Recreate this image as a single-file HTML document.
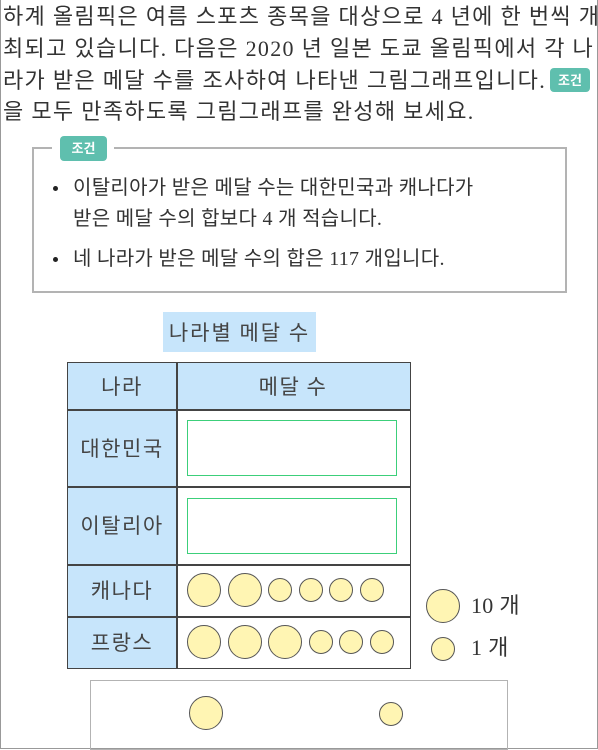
<!DOCTYPE html>
<html><head><meta charset="utf-8"><style>
*{margin:0;padding:0;box-sizing:border-box}
body{width:598px;height:749px;background:#fff;position:relative;overflow:hidden;font-family:"Liberation Serif","Noto Sans CJK KR",sans-serif;color:#333}
.frame{position:absolute;left:0;top:0;width:598px;height:749px;border:1px solid #999;border-top:none}
.p{position:absolute;left:3px;font-size:22px;line-height:30px;white-space:nowrap;letter-spacing:1.3px}
.badge{position:absolute;background:#5fbfae;color:#fff;font-family:"Noto Sans CJK KR",sans-serif;font-weight:bold;font-size:13px;border-radius:4px;text-align:center;line-height:24px}
.t{position:absolute;font-size:20px;line-height:26px;white-space:nowrap;letter-spacing:0.3px}
.dot{position:absolute;width:5px;height:5px;border-radius:50%;background:#222}
.c{position:absolute;border:1.5px solid #555;border-radius:50%;background:#fff5b3}
.cell{position:absolute;display:flex;align-items:center;justify-content:center;font-family:"Noto Sans CJK KR",sans-serif;font-size:21px;letter-spacing:1.5px;color:#444}
</style></head><body>
<div class="frame"></div>
<div class="p" style="top:2px">하계 올림픽은 여름 스포츠 종목을 대상으로 4 년에 한 번씩 개</div>
<div class="p" style="top:34px">최되고 있습니다. 다음은 2020 년 일본 도쿄 올림픽에서 각 나</div>
<div class="p" style="top:66px">라가 받은 메달 수를 조사하여 나타낸 그림그래프입니다.</div>
<div class="badge" style="left:550px;top:68px;width:40px;height:24px">조건</div>
<div class="p" style="top:97px">을 모두 만족하도록 그림그래프를 완성해 보세요.</div>

<div style="position:absolute;left:32px;top:147px;width:535px;height:146px;border:2px solid #b3b3b3"></div>
<div style="position:absolute;left:52px;top:138px;width:62px;height:20px;background:#fff"></div>
<div class="badge" style="left:60px;top:136px;width:47px;height:25px">조건</div>
<div class="dot" style="left:53px;top:186px"></div>
<div class="t" style="left:73px;top:175px">이탈리아가 받은 메달 수는 대한민국과 캐나다가</div>
<div class="t" style="left:73px;top:206px">받은 메달 수의 합보다 4 개 적습니다.</div>
<div class="dot" style="left:53px;top:257px"></div>
<div class="t" style="left:73px;top:246px">네 나라가 받은 메달 수의 합은 117 개입니다.</div>

<div class="cell" style="left:163px;top:312px;width:153px;height:40px;background:#c7e5fb;letter-spacing:2px">나라별 메달 수</div>

<div style="position:absolute;left:67px;top:362px;width:344px;height:307px;border:1.5px solid #444"></div>
<div class="cell" style="left:68px;top:363px;width:108px;height:305px;background:#c7e5fb"></div>
<div class="cell" style="left:176px;top:363px;width:234px;height:46px;background:#c7e5fb">메달 수</div>
<div class="cell" style="left:68px;top:363px;width:108px;height:46px">나라</div>
<div class="cell" style="left:68px;top:409px;width:108px;height:77px">대한민국</div>
<div class="cell" style="left:68px;top:486px;width:108px;height:78px">이탈리아</div>
<div class="cell" style="left:68px;top:564px;width:108px;height:52px">캐나다</div>
<div class="cell" style="left:68px;top:616px;width:108px;height:52px">프랑스</div>
<div style="position:absolute;left:176px;top:362px;width:1.5px;height:306px;background:#444"></div>
<div style="position:absolute;left:67px;top:409px;width:344px;height:1.5px;background:#444"></div>
<div style="position:absolute;left:67px;top:486px;width:344px;height:1.5px;background:#444"></div>
<div style="position:absolute;left:67px;top:564px;width:344px;height:1.5px;background:#444"></div>
<div style="position:absolute;left:67px;top:616px;width:344px;height:1.5px;background:#444"></div>
<div style="position:absolute;left:187px;top:420px;width:210px;height:56px;border:1.5px solid #3ccf7a"></div>
<div style="position:absolute;left:187px;top:498px;width:210px;height:56px;border:1.5px solid #3ccf7a"></div>

<div class="c" style="left:187px;top:573px;width:34px;height:34px"></div>
<div class="c" style="left:228px;top:573px;width:34px;height:34px"></div>
<div class="c" style="left:268px;top:578px;width:24px;height:24px"></div>
<div class="c" style="left:299px;top:578px;width:24px;height:24px"></div>
<div class="c" style="left:329px;top:578px;width:24px;height:24px"></div>
<div class="c" style="left:360px;top:578px;width:24px;height:24px"></div>

<div class="c" style="left:187px;top:625px;width:34px;height:34px"></div>
<div class="c" style="left:228px;top:625px;width:34px;height:34px"></div>
<div class="c" style="left:268px;top:625px;width:34px;height:34px"></div>
<div class="c" style="left:309px;top:630px;width:24px;height:24px"></div>
<div class="c" style="left:339px;top:630px;width:24px;height:24px"></div>
<div class="c" style="left:370px;top:630px;width:24px;height:24px"></div>

<div class="c" style="left:426px;top:589px;width:34px;height:34px"></div>
<div class="t" style="left:471px;top:593px;font-size:22px">10 개</div>
<div class="c" style="left:431px;top:637px;width:24px;height:24px"></div>
<div class="t" style="left:471px;top:635px;font-size:22px">1 개</div>

<div style="position:absolute;left:90px;top:680px;width:418px;height:70px;border:1.5px solid #b3b3b3"></div>
<div class="c" style="left:189px;top:696px;width:34px;height:34px"></div>
<div class="c" style="left:379px;top:702px;width:24px;height:24px"></div>
</body></html>
